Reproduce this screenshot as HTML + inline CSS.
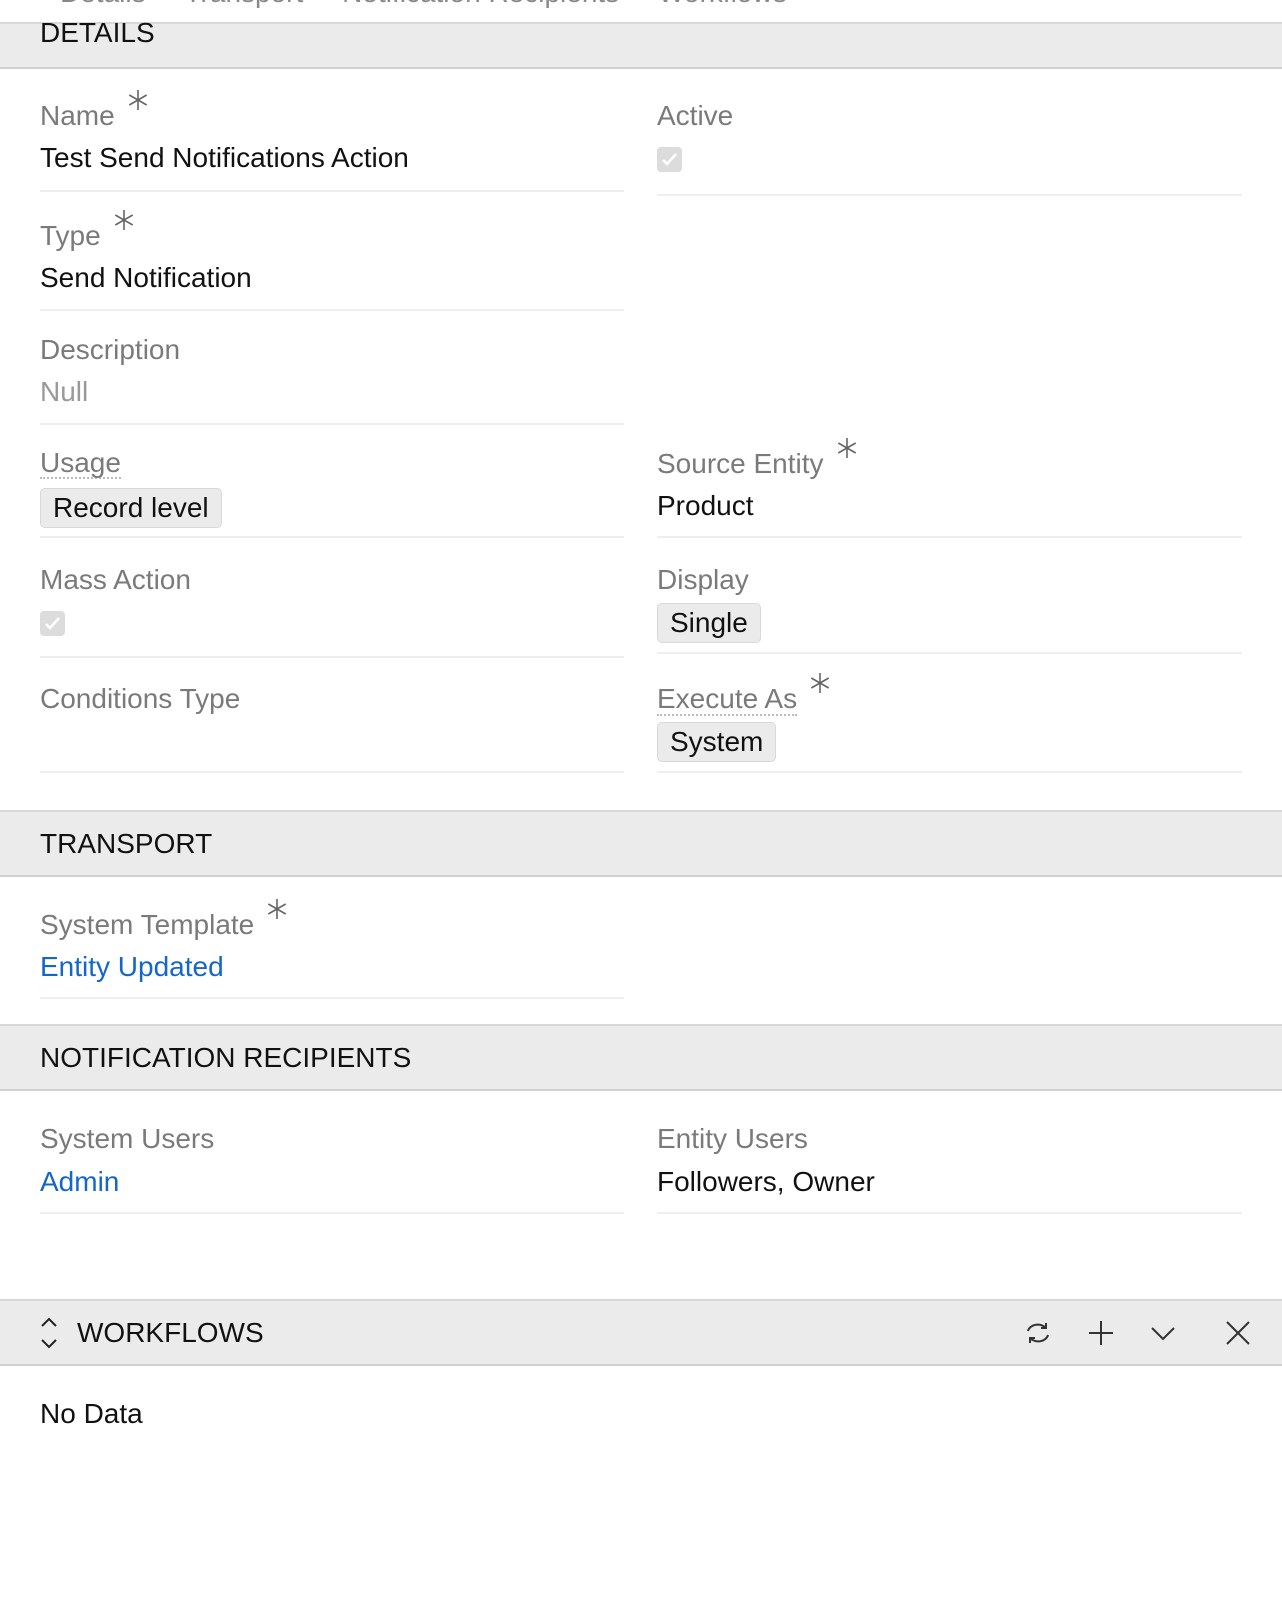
<!DOCTYPE html>
<html><head><meta charset="utf-8"><style>
*{margin:0;padding:0;box-sizing:border-box}
body{width:1282px;height:1608px;background:#fff;font-family:"Liberation Sans",Arial,sans-serif;position:relative;overflow:hidden;font-size:28px}
.a{position:absolute;white-space:nowrap;line-height:30px}
.l{color:#7a7a7a}
.v{color:#111}
.lk{color:#1467c6}
.hdr{position:absolute;left:0;width:1282px;background:#ebebeb;border-top:2px solid #d8d8d8;border-bottom:2px solid #d0d0d0}
.ht{position:absolute;left:40px;color:#111;font-size:28px;line-height:30px}
.div{position:absolute;height:2px;background:#eeeeee}
.req{display:inline-block;vertical-align:top;margin-left:12px;margin-top:-12px}
.pill{position:absolute;background:#ebebeb;border:1px solid #d8d8d8;border-radius:5px;color:#111;font-size:28px;line-height:38px;padding:0 12px}
.cb{position:absolute;width:25px;height:25px;background:#dcdcdc;border-radius:4px}
.dot{border-bottom:2px dotted #bbb}
</style></head><body>
<svg width="0" height="0" style="position:absolute"><defs><g id="st"><path d="M11 1v20M2.3 6l17.4 10M2.3 16l17.4-10" stroke="#666" stroke-width="1.6"/></g></defs></svg>
<div class="a" style="top:-22px;left:60px;color:#888">Details&nbsp;&nbsp;&nbsp;&nbsp;&nbsp;Transport&nbsp;&nbsp;&nbsp;&nbsp;&nbsp;Notification Recipients&nbsp;&nbsp;&nbsp;&nbsp;&nbsp;Workflows</div>
<div class="hdr" style="top:22px;height:47px"><div class="ht" style="top:-6px">DETAILS</div></div>

<div class="a l" style="left:40px;top:101px">Name<svg class="req" width="22" height="22"><use href="#st"/></svg></div>
<div class="a v" style="left:40px;top:143px">Test Send Notifications Action</div>
<div class="div" style="left:40px;top:190px;width:584px"></div>
<div class="a l" style="left:657px;top:101px">Active</div>
<div class="cb" style="left:657px;top:147px"><svg width="25" height="25"><path d="M6 13l4 4 9-10" stroke="#fff" stroke-width="2.5" fill="none"/></svg></div>
<div class="div" style="left:657px;top:194px;width:585px"></div>

<div class="a l" style="left:40px;top:221px">Type<svg class="req" width="22" height="22"><use href="#st"/></svg></div>
<div class="a v" style="left:40px;top:263px">Send Notification</div>
<div class="div" style="left:40px;top:309px;width:584px"></div>

<div class="a l" style="left:40px;top:335px">Description</div>
<div class="a" style="left:40px;top:377px;color:#999">Null</div>
<div class="div" style="left:40px;top:423px;width:584px"></div>

<div class="a l dot" style="left:40px;top:449px;line-height:28px">Usage</div>
<div class="pill" style="left:40px;top:488px">Record level</div>
<div class="div" style="left:40px;top:536px;width:584px"></div>
<div class="a l" style="left:657px;top:449px">Source Entity<svg class="req" width="22" height="22"><use href="#st"/></svg></div>
<div class="a v" style="left:657px;top:491px">Product</div>
<div class="div" style="left:657px;top:536px;width:585px"></div>

<div class="a l" style="left:40px;top:565px">Mass Action</div>
<div class="cb" style="left:40px;top:611px"><svg width="25" height="25"><path d="M6 13l4 4 9-10" stroke="#fff" stroke-width="2.5" fill="none"/></svg></div>
<div class="div" style="left:40px;top:656px;width:584px"></div>
<div class="a l" style="left:657px;top:565px">Display</div>
<div class="pill" style="left:657px;top:603px">Single</div>
<div class="div" style="left:657px;top:652px;width:585px"></div>

<div class="a l" style="left:40px;top:684px">Conditions Type</div>
<div class="div" style="left:40px;top:771px;width:584px"></div>
<div class="a l" style="left:657px;top:684px"><span class="dot">Execute As</span><svg class="req" width="22" height="22"><use href="#st"/></svg></div>
<div class="pill" style="left:657px;top:722px">System</div>
<div class="div" style="left:657px;top:771px;width:585px"></div>

<div class="hdr" style="top:810px;height:67px"><div class="ht" style="top:17px">TRANSPORT</div></div>
<div class="a l" style="left:40px;top:910px">System Template<svg class="req" width="22" height="22"><use href="#st"/></svg></div>
<div class="a lk" style="left:40px;top:952px">Entity Updated</div>
<div class="div" style="left:40px;top:997px;width:584px"></div>

<div class="hdr" style="top:1024px;height:67px"><div class="ht" style="top:17px">NOTIFICATION RECIPIENTS</div></div>
<div class="a l" style="left:40px;top:1124px">System Users</div>
<div class="a lk" style="left:40px;top:1167px">Admin</div>
<div class="div" style="left:40px;top:1212px;width:584px"></div>
<div class="a l" style="left:657px;top:1124px">Entity Users</div>
<div class="a v" style="left:657px;top:1167px">Followers, Owner</div>
<div class="div" style="left:657px;top:1212px;width:585px"></div>

<div class="hdr" style="top:1299px;height:67px">
<svg style="position:absolute;left:39px;top:14px" width="20" height="36"><path d="M3 11l7-7 7 7M3 25l7 7 7-7" stroke="#222" stroke-width="2" fill="none"/></svg>
<div class="ht" style="top:17px;left:77px">WORKFLOWS</div>
<svg style="position:absolute;left:1024px;top:18px" width="28" height="28"><path d="M4 12a10 8 0 0 1 18-3M22 4v5h-5" stroke="#333" stroke-width="2" fill="none"/><path d="M24 16a10 8 0 0 1-18 3M6 24v-5h5" stroke="#333" stroke-width="2" fill="none"/></svg>
<svg style="position:absolute;left:1087px;top:18px" width="28" height="28"><path d="M14 2v24M2 14h24" stroke="#333" stroke-width="2" fill="none"/></svg>
<svg style="position:absolute;left:1149px;top:18px" width="28" height="28"><path d="M3 9l11 11 11-11" stroke="#333" stroke-width="2" fill="none"/></svg>
<svg style="position:absolute;left:1224px;top:18px" width="28" height="28"><path d="M3 3l22 22M25 3L3 25" stroke="#333" stroke-width="2" fill="none"/></svg>
</div>
<div class="a v" style="left:40px;top:1399px">No Data</div>
</body></html>
